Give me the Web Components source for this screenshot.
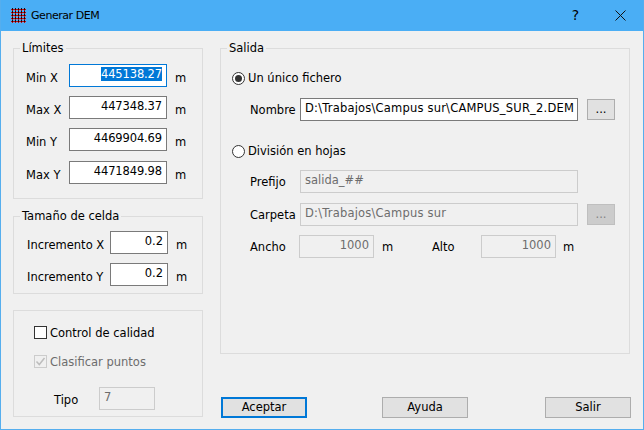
<!DOCTYPE html>
<html><head><meta charset="utf-8">
<style>
html,body{margin:0;padding:0;background:#f0f0f0}
body{width:644px;height:430px;overflow:hidden;font:11.5px/13px "DejaVu Sans",sans-serif;color:#000}
</style></head><body>
<x-dialog>
  <x-group slot="left" legend="Límites" style="--h:149px;--pt:8px;--pl:12px;--gap:9px">
    <x-field label="Min X" value="445138.27" unit="m" selected style="--lw:43px;--iw:98px;--ils:-.13px"></x-field>
    <x-field label="Max X" value="447348.37" unit="m" style="--lw:43px;--iw:98px;--ils:-.13px"></x-field>
    <x-field label="Min Y" value="4469904.69" unit="m" style="--lw:43px;--iw:98px;--ils:-.13px"></x-field>
    <x-field label="Max Y" value="4471849.98" unit="m" style="--lw:43px;--iw:98px;--ils:-.13px;margin-top:1px"></x-field>
  </x-group>
  <x-group slot="left" legend="Tamaño de celda" style="--h:76px;--pt:7px;--pl:13px;--gap:9px;margin-top:17px">
    <x-field label="Incremento X" value="0.2" unit="m" style="--lw:83px;--iw:58px"></x-field>
    <x-field label="Incremento Y" value="0.2" unit="m" style="--lw:83px;--iw:58px"></x-field>
  </x-group>
  <x-group slot="left" style="--h:105px;--pt:15px;--pl:20px;--gap:16px;margin-top:16px">
    <x-check>Control de calidad</x-check>
    <x-check checked disabled>Clasificar puntos</x-check>
    <x-field label="Tipo" value="7" align="left" disabled style="--lw:45px;--iw:56px;--lp:7px;margin:3px 0 0 20px"></x-field>
  </x-group>
  <x-group slot="right" legend="Salida" style="--h:304px;--pt:16px;--pl:11px;--gap:0px">
    <x-radio checked>Un único fichero</x-radio>
    <x-field label="Nombre" value="D:\Trabajos\Campus sur\CAMPUS_SUR_2.DEM" align="left" browse style="--lw:50px;--iw:278px;--lp:6px;--ils:.2px;margin:13px 0 0 18px"></x-field>
    <x-radio style="margin-top:24px">División en hojas</x-radio>
    <x-field label="Prefijo" value="salida_##" align="left" disabled style="--lw:50px;--iw:278px;--lp:6px;margin:12px 0 0 18px"></x-field>
    <x-field label="Carpeta" value="D:\Trabajos\Campus sur" align="left" disabled browse style="--lw:50px;--iw:278px;--lp:6px;--ils:.2px;margin:10px 0 0 18px"></x-field>
    <x-size-row style="margin:9px 0 0 18px">
      <x-field label="Ancho" value="1000" unit="m" disabled style="--lw:49px;--iw:75px;--uw:50px;--lp:6px"></x-field>
      <x-field label="Alto" value="1000" unit="m" disabled style="--lw:49px;--iw:75px;--ug:7px;--lp:6px"></x-field>
    </x-size-row>
  </x-group>
  <x-button slot="actions" default>Aceptar</x-button>
  <x-button slot="actions">Ayuda</x-button>
  <x-button slot="actions">Salir</x-button>
</x-dialog>
<script>
function def(name, css, html, init){
  customElements.define(name, class extends HTMLElement{
    constructor(){super();this.attachShadow({mode:'open'}).innerHTML='<style>'+css+'</style>'+html;}
    connectedCallback(){ if(init) init.call(this,this.shadowRoot); }
  });
}
def('x-titlebar',
 `:host{display:flex;align-items:center;height:31px;background:#4aaef5;color:#000}
  svg{display:block}
  .ic{margin-left:10px;width:15px;height:15px}
  .t{margin-left:5px;flex:1;padding-bottom:1px;font-size:11px;letter-spacing:-.45px}
  .b{width:45px;height:31px;display:flex;align-items:center;justify-content:center}
  .q{font-size:14px}`,
 `<svg class="ic" viewBox="0 0 15 15" shape-rendering="crispEdges"><path d="M1.5 0V15M4.5 0V15M7.5 0V15M10.5 0V15M13.5 0V15M0 1.5H15M0 4.5H15M0 7.5H15M0 10.5H15M0 13.5H15" stroke="#d40000" stroke-width="1" fill="none"/><path d="M1.5 0V15M4.5 0V15M7.5 0V15M10.5 0V15M13.5 0V15" stroke="#111" stroke-width="1" stroke-dasharray="1 2" fill="none" stroke-dashoffset="0"/><path d="M1 1h1v1H1zM4 1h1v1H4zM7 1h1v1H7zM10 1h1v1h-1zM13 1h1v1h-1zM1 4h1v1H1zM4 4h1v1H4zM7 4h1v1H7zM10 4h1v1h-1zM13 4h1v1h-1zM1 7h1v1H1zM4 7h1v1H4zM7 7h1v1H7zM10 7h1v1h-1zM13 7h1v1h-1zM1 10h1v1H1zM4 10h1v1H4zM7 10h1v1H7zM10 10h1v1h-1zM13 10h1v1h-1zM1 13h1v1H1zM4 13h1v1H4zM7 13h1v1H7zM10 13h1v1h-1zM13 13h1v1h-1z" fill="#111"/></svg>
  <span class="t"><slot></slot></span>
  <span class="b q">?</span>
  <span class="b"><svg width="11" height="11" viewBox="0 0 11 11"><path d="M.5.5l10 10M10.5.5l-10 10" stroke="#111" stroke-width="1" fill="none"/></svg></span>`);
def('x-dialog',
 `:host{display:block;width:644px;height:430px;box-sizing:border-box;border:1px solid #55aeee;border-top:0;background:#f0f0f0}
  .main{display:grid;grid-template-columns:190px 410px;column-gap:17px;padding:17px 0 0 12px}
  .l,.r{display:flex;flex-direction:column}
  .a{display:grid;grid-template-columns:161px 163px 86px;margin:43px 0 0 1px}`,
 `<x-titlebar>Generar DEM</x-titlebar>
  <div class="main"><div class="l"><slot name="left"></slot></div>
  <div class="r"><slot name="right"></slot><div class="a"><slot name="actions"></slot></div></div></div>`);
def('x-group',
 `:host{display:block;box-sizing:content-box;height:var(--h);border:1px solid #dcdcdc}
  .lg{display:table;height:15px;line-height:15px;margin:-8px 0 0 6px;padding:0 2px;background:#f0f0f0}
  .lg:empty{display:block;height:0;margin:0;padding:0}
  .c{display:flex;flex-direction:column;align-items:flex-start;gap:var(--gap);padding:var(--pt) 0 0 var(--pl)}`,
 `<div class="lg"></div><div class="c"><slot></slot></div>`,
 function(s){ s.querySelector('.lg').textContent=this.getAttribute('legend')||''; });
def('x-input',
 `:host{display:block;box-sizing:border-box;width:var(--iw);height:23px;border:1px solid #7a7a7a;background:#fff;padding:3px 4px 0;white-space:nowrap;overflow:hidden;line-height:13px;letter-spacing:var(--ils,0)}
  :host([right]){text-align:right}
  :host([selected]){border-color:#0078d7}
  :host([selected]) span{background:#0078d7;color:#fff}
  :host([disabled]){background:#f0f0f0;border-color:#ccc;color:#6d6d6d}`,
 `<span><slot></slot></span>`);
def('x-field',
 `:host{display:flex;align-items:flex-start}
  .l{width:var(--lw);flex:none;padding-top:var(--lp,8px);white-space:nowrap}
  .u{margin-left:var(--ug,8px);padding-top:var(--lp,8px);width:var(--uw,auto)}
  x-button{margin:1px 0 0 9px;--bw:28px;--bh:21px}`,
 ``,
 function(s){
  if(s.querySelector('.l'))return;
  const a=n=>this.getAttribute(n), h=n=>this.hasAttribute(n);
  const d=h('disabled');
  const w=document.createElement('div');
  w.style.display='contents';
  w.innerHTML=`<span class="l">${a('label')}</span><x-input ${a('align')==='left'?'':'right'} ${h('selected')?'selected':''} ${d?'disabled':''}></x-input>`
   +(a('unit')?`<span class="u">${a('unit')}</span>`:'')
   +(h('browse')?`<x-button ${d?'disabled':''}>...</x-button>`:'');
  w.querySelector('x-input').textContent=a('value');
  s.appendChild(w);
 });
def('x-size-row',`:host{display:flex}`,`<slot></slot>`);
def('x-check',
 `:host{display:flex;align-items:flex-start;height:13px}
  .b{width:13px;height:13px;box-sizing:border-box;border:1px solid #333;background:#fff;margin-right:3px;flex:none}
  .x{padding-top:1px}
  svg{display:none;width:11px;height:11px}
  :host([checked]) svg{display:block}
  :host([disabled]){color:#6d6d6d}
  :host([disabled]) .b{border-color:#ccc;background:#f0f0f0}`,
 `<span class="b"><svg viewBox="0 0 11 11"><path d="M1.5 5.5l2.8 3L9.5 2" stroke="#bdbdbd" stroke-width="1.5" fill="none"/></svg></span><span class="x"><slot></slot></span>`);
def('x-radio',
 `:host{display:flex;align-items:flex-start}
  svg{width:13px;height:13px;margin-right:3px;flex:none;display:block}
  circle.d{display:none}
  :host([checked]) circle.d{display:inline}`,
 `<svg viewBox="0 0 13 13"><circle cx="6.5" cy="6.5" r="6" fill="#fff" stroke="#333"/><circle class="d" cx="6.5" cy="6.5" r="3.5" fill="#333"/></svg><span><slot></slot></span>`);
def('x-button',
 `:host{display:flex;align-items:center;justify-content:center;box-sizing:border-box;width:var(--bw,86px);height:var(--bh,21px);border:1px solid #adadad;background:#e1e1e1;flex:none}
  :host([default]){border:2px solid #0078d7}
  :host([disabled]){background:#ccc;border-color:#bfbfbf;color:#838383}`,
 `<slot></slot>`);
</script>
</body></html>
